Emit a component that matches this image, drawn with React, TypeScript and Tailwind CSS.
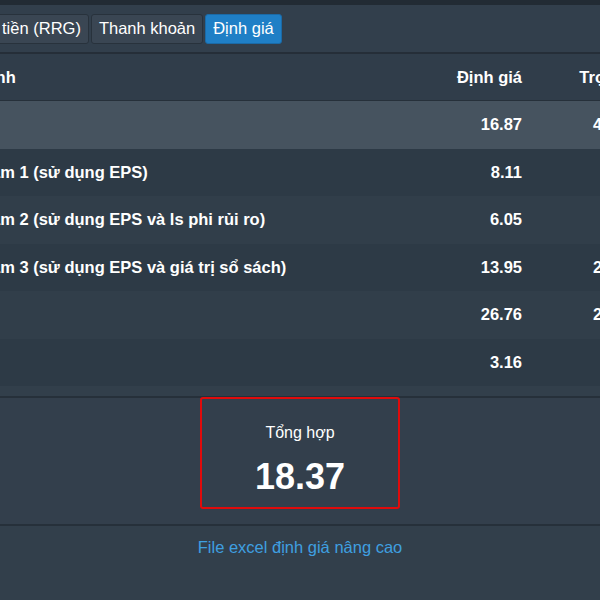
import React from 'react';

type Row = { label: string; value: string; weight?: string; highlight?: boolean };

const rows: Row[] = [
  { label: 'P/E', value: '16.87', weight: '45.00%', highlight: true },
  { label: 'Graham 1 (sử dụng EPS)', value: '8.11' },
  { label: 'Graham 2 (sử dụng EPS và ls phi rủi ro)', value: '6.05' },
  { label: 'Graham 3 (sử dụng EPS và giá trị sổ sách)', value: '13.95', weight: '20.00%' },
  { label: 'P/B', value: '26.76', weight: '25.00%' },
  { label: 'PEG', value: '3.16' },
];

const tabs = ['Dòng tiền (RRG)', 'Thanh khoản', 'Định giá'];

export default function App() {
  return (
    <div className="w-[600px] h-[600px] overflow-hidden bg-[#323f4b] text-white font-['Liberation_Sans',Arial,sans-serif]">
      {/* Top strip */}
      <div className="h-[5px] bg-[#222b34]" />

      {/* Tabs */}
      <div className="h-[47px] flex items-center gap-[2px] -ml-[50px] bg-[#323f4c]">
        {tabs.map((t) => {
          const active = t === 'Định giá';
          return (
            <div
              key={t}
              className={
                active
                  ? 'h-[30px] px-[7px] flex items-center rounded-[3px] text-[16.5px] bg-[#1f7fc6] border border-[#1b6aa6]'
                  : 'h-[30px] px-[7px] flex items-center rounded-[3px] text-[16.5px] bg-[#3a4653] border border-[#28323c]'
              }
            >
              {t}
            </div>
          );
        })}
      </div>
      <div className="h-[2px] bg-[#252e38]" />

      {/* Table */}
      <div className="-ml-[47.5px] w-[760px] text-[16.5px] font-bold">
        <div className="h-[47px] flex items-center bg-[#303d4a] border-b border-[#26303a]">
          <div className="w-[469.5px]">Mô hình</div>
          <div className="w-[100px] text-right">Định giá</div>
          <div className="w-[127px] text-right">Trọng số</div>
        </div>
        {rows.map((r, i) => (
          <div
            key={r.label}
            className={
              r.highlight
                ? 'h-[47.5px] flex items-center bg-[#46535f]'
                : i % 2 === 1
                ? 'h-[47.5px] flex items-center bg-[#2d3a46]'
                : 'h-[47.5px] flex items-center bg-[#313e4a]'
            }
          >
            <div className="w-[469.5px]">{r.label}</div>
            <div className="w-[100px] text-right">{r.value}</div>
            <div className="w-[127px] text-right">{r.weight ?? ''}</div>
          </div>
        ))}
      </div>

      {/* Summary */}
      <div className="mt-[10px] h-[130px] border-t-2 border-b-2 border-[#26303a] bg-[#333f4c]">
        <div className="-mt-[1px] mx-auto w-[200px] h-[112px] border-2 border-[#e00b0b] rounded-[3px] flex flex-col items-center">
          <div className="mt-[22px] text-[16px]">Tổng hợp</div>
          <div className="mt-[14px] text-[36px] font-bold leading-none">18.37</div>
        </div>
      </div>

      {/* Link */}
      <div className="pt-[9px] text-center text-[16.5px] text-[#3f9fe0]">File excel định giá nâng cao</div>
    </div>
  );
}
